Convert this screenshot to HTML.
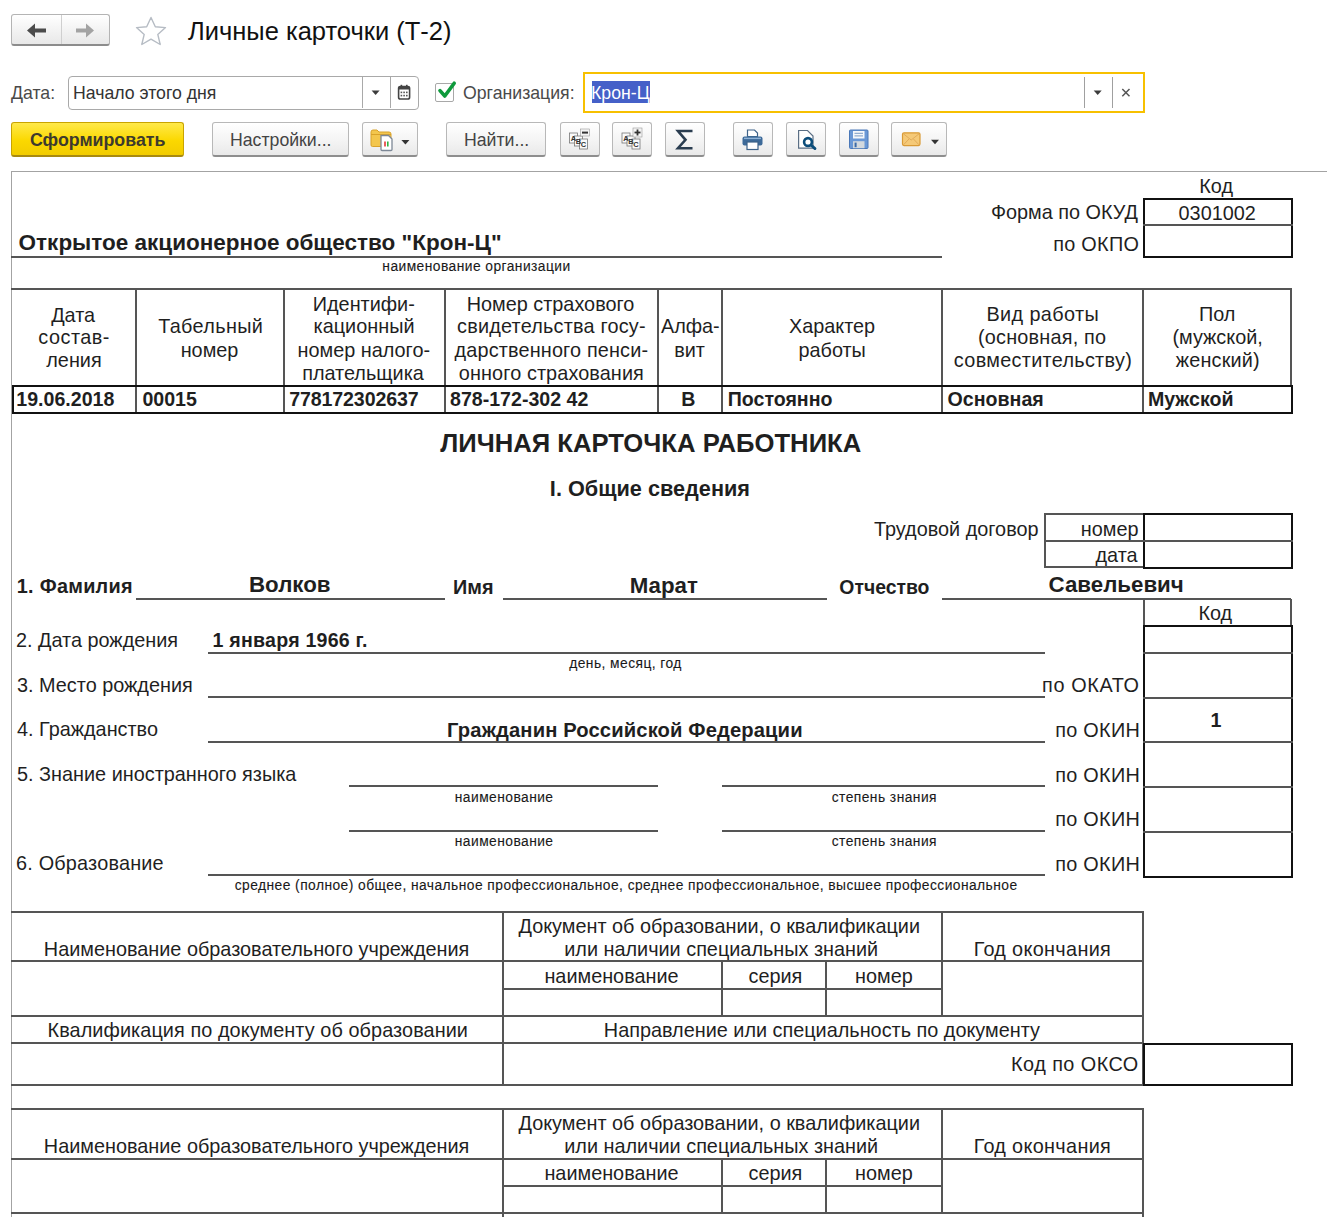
<!DOCTYPE html>
<html><head><meta charset="utf-8"><title>Личные карточки (Т-2)</title>
<style>
html,body{margin:0;padding:0;background:#fff;width:1327px;height:1217px;overflow:hidden;position:relative;font-family:"Liberation Sans", sans-serif;}
.t{position:absolute;white-space:nowrap;}
.l{position:absolute;}
</style></head><body>
<!-- nav buttons -->
<div style="position:absolute;left:11px;top:14px;width:97px;height:29px;border:1px solid #b4b4b4;border-bottom:2px solid #8c8c8c;border-radius:3px;background:linear-gradient(#ffffff,#f1f1f1 60%,#e8e8e8)"></div>
<div style="position:absolute;left:61px;top:15px;width:1px;height:29px;background:#cfcfcf"></div>
<svg style="position:absolute;left:0;top:0" width="200" height="60">
  <path d="M27 30.5 L35 23.5 L35 28.4 L46 28.4 L46 32.6 L35 32.6 L35 37.5 Z" fill="#4b4b4b"/>
  <path d="M94 30.5 L86 23.5 L86 28.4 L76 28.4 L76 32.6 L86 32.6 L86 37.5 Z" fill="#a3a3a3"/>
  <path d="M151 17.5 L155.3 26.7 L165.5 27.6 L157.8 34.4 L160.2 44.5 L151 39.2 L141.8 44.5 L144.2 34.4 L136.5 27.6 L146.7 26.7 Z" fill="none" stroke="#b6bcc4" stroke-width="1.4" stroke-linejoin="round"/>
</svg>
<div class="t" style="left:188px;top:18.7px;font-size:25.5px;line-height:25.5px;color:#111">Личные карточки (Т-2)</div>

<!-- filter row -->
<div class="t" style="left:11px;top:84.6px;font-size:17.7px;line-height:17.7px;color:#4a4a4a">Дата:</div>
<div style="position:absolute;left:68px;top:76px;width:349px;height:32px;border:1px solid #a9a9a9;border-radius:4px;background:#fff"></div>
<div style="position:absolute;left:362px;top:77px;width:1px;height:31px;background:#a9a9a9"></div>
<div style="position:absolute;left:390px;top:77px;width:1px;height:31px;background:#a9a9a9"></div>
<div class="t" style="left:73px;top:84.6px;font-size:17.7px;line-height:17.7px;color:#333">Начало этого дня</div>
<svg style="position:absolute;left:360px;top:75px" width="60" height="35">
  <path d="M11.6 15.5 L19.6 15.5 L15.6 20 Z" fill="#3c3c3c"/>
  <rect x="38.6" y="11.5" width="11" height="12.5" rx="1.8" fill="none" stroke="#444" stroke-width="1.6"/>
  <rect x="38.6" y="11.5" width="11" height="3" fill="#444"/>
  <rect x="40.6" y="9.8" width="1.6" height="3" fill="#444"/>
  <rect x="46" y="9.8" width="1.6" height="3" fill="#444"/>
  <g fill="#555"><rect x="40.6" y="16.6" width="1.6" height="1.6"/><rect x="43.3" y="16.6" width="1.6" height="1.6"/><rect x="46" y="16.6" width="1.6" height="1.6"/><rect x="40.6" y="19.8" width="1.6" height="1.6"/><rect x="43.3" y="19.8" width="1.6" height="1.6"/><rect x="46" y="19.8" width="1.6" height="1.6"/></g>
</svg>
<div style="position:absolute;left:435px;top:83px;width:17px;height:17px;border:1.5px solid #a8a8a8;border-radius:2px;background:#fff"></div>
<svg style="position:absolute;left:430px;top:75px" width="30" height="35">
  <path d="M10 15.6 L14.8 21 L24.2 8.2" fill="none" stroke="#0e9a3c" stroke-width="3.6" stroke-linecap="round" stroke-linejoin="round"/>
</svg>
<div class="t" style="left:463px;top:84.6px;font-size:17.7px;line-height:17.7px;color:#4a4a4a">Организация:</div>
<div style="position:absolute;left:583px;top:72px;width:558px;height:37px;border:2px solid #f7c000;background:#fff"></div>
<div style="position:absolute;left:592px;top:81px;width:58px;height:22px;background:#4560c8"></div>
<div class="t" style="left:591px;top:84.6px;font-size:17.7px;line-height:17.7px;color:#fff">Крон-Ц</div>
<div style="position:absolute;left:1084px;top:77px;width:1px;height:31px;background:#a0a0a0"></div>
<div style="position:absolute;left:1112px;top:77px;width:1px;height:31px;background:#a0a0a0"></div>
<svg style="position:absolute;left:1080px;top:75px" width="60" height="35">
  <path d="M13.7 15.5 L21.7 15.5 L17.7 20 Z" fill="#3c3c3c"/>
  <path d="M42.3 14 L49.5 21.2 M49.5 14 L42.3 21.2" stroke="#555" stroke-width="1.5"/>
</svg>

<!-- button row -->
<div style="position:absolute;left:11px;top:122px;width:171px;height:32px;border:1px solid #c9a400;border-bottom:2px solid #a88a10;border-radius:3px;background:linear-gradient(#ffe94a,#fbd800 55%,#f2cc00)"></div>
<div class="t" style="left:30px;top:132.2px;font-size:17.8px;line-height:17.8px;font-weight:bold;color:#3d3a2e">Сформировать</div>

<div style="position:absolute;left:212px;top:122px;width:135px;height:32px;border:1px solid #b8b8b8;border-bottom:2px solid #8e8e8e;border-radius:3px;background:linear-gradient(#ffffff,#f3f3f3 60%,#e9e9e9)"></div>
<div class="t" style="left:230px;top:132.2px;font-size:17.7px;line-height:17.7px;color:#444">Настройки...</div>

<div style="position:absolute;left:362px;top:122px;width:54px;height:32px;border:1px solid #b8b8b8;border-bottom:2px solid #8e8e8e;border-radius:3px;background:linear-gradient(#ffffff,#f3f3f3 60%,#e9e9e9)"></div>
<svg style="position:absolute;left:360px;top:120px" width="60" height="40">
  <path d="M11 12 Q11 10 13 10 L17 10 L19 12 L29 12 Q31 12 31 14 L31 25 Q31 26.5 29.5 26.5 L12.5 26.5 Q11 26.5 11 25 Z" fill="#f3c64d" stroke="#d9a22a" stroke-width="1"/>
  <path d="M11 14.5 L31 14.5" stroke="#d9a22a" stroke-width="1"/>
  <path d="M21 15.5 L28.5 15.5 L32 19 L32 29.5 Q32 30.5 31 30.5 L22 30.5 Q21 30.5 21 29.5 Z" fill="#fff" stroke="#7d8896" stroke-width="1.3"/>
  <rect x="24.2" y="21.5" width="1.6" height="5" fill="#e53935"/>
  <rect x="27" y="21.5" width="1.6" height="5" fill="#2fb344"/>
  <path d="M41.4 20 L49.4 20 L45.4 24.5 Z" fill="#333"/>
</svg>

<div style="position:absolute;left:446px;top:122px;width:98px;height:32px;border:1px solid #b8b8b8;border-bottom:2px solid #8e8e8e;border-radius:3px;background:linear-gradient(#ffffff,#f3f3f3 60%,#e9e9e9)"></div>
<div class="t" style="left:464px;top:132.2px;font-size:17.7px;line-height:17.7px;color:#444">Найти...</div>

<div style="position:absolute;left:560px;top:122px;width:38px;height:32px;border:1px solid #b8b8b8;border-bottom:2px solid #8e8e8e;border-radius:3px;background:linear-gradient(#ffffff,#f3f3f3 60%,#e9e9e9)"></div>
<div style="position:absolute;left:612px;top:122px;width:38px;height:32px;border:1px solid #b8b8b8;border-bottom:2px solid #8e8e8e;border-radius:3px;background:linear-gradient(#ffffff,#f3f3f3 60%,#e9e9e9)"></div>
<div style="position:absolute;left:665px;top:122px;width:38px;height:32px;border:1px solid #b8b8b8;border-bottom:2px solid #8e8e8e;border-radius:3px;background:linear-gradient(#ffffff,#f3f3f3 60%,#e9e9e9)"></div>
<svg style="position:absolute;left:555px;top:118px" width="160" height="42">
  <g font-family="Liberation Sans" font-size="7.5" font-weight="bold" fill="#333">
    <rect x="14.5" y="15" width="8" height="10" fill="#fafafa" stroke="#777" stroke-width="0.8"/>
    <rect x="19.5" y="18" width="8" height="10" fill="#fafafa" stroke="#777" stroke-width="0.8"/>
    <rect x="24.5" y="21" width="8" height="10" fill="#fafafa" stroke="#777" stroke-width="0.8"/>
    <text x="15.8" y="23">A</text><text x="20.8" y="26">B</text><text x="25.8" y="29">C</text>
    <rect x="25.5" y="11" width="9" height="7" fill="#f4f4f4" stroke="#999" stroke-width="0.6"/>
    <rect x="27" y="13.6" width="6" height="2" fill="#333"/>
  </g>
  <g font-family="Liberation Sans" font-size="7.5" font-weight="bold" fill="#333">
    <rect x="67" y="15" width="8" height="10" fill="#fafafa" stroke="#777" stroke-width="0.8"/>
    <rect x="72" y="18" width="8" height="10" fill="#fafafa" stroke="#777" stroke-width="0.8"/>
    <rect x="77" y="21" width="8" height="10" fill="#fafafa" stroke="#777" stroke-width="0.8"/>
    <text x="68.3" y="23">A</text><text x="73.3" y="26">B</text><text x="78.3" y="29">C</text>
    <rect x="78" y="10" width="9" height="9" fill="#f4f4f4" stroke="#999" stroke-width="0.6"/>
    <rect x="79.5" y="13.6" width="6" height="1.8" fill="#333"/><rect x="81.6" y="11.5" width="1.8" height="6" fill="#333"/>
  </g>
  <path d="M137.5 13 L123 13 L130.5 21.8 L123 30.2 L137.5 30.2" fill="none" stroke="#2a3d50" stroke-width="2.6" stroke-linejoin="miter"/>
</svg>

<div style="position:absolute;left:733px;top:122px;width:38px;height:32px;border:1px solid #b8b8b8;border-bottom:2px solid #8e8e8e;border-radius:3px;background:linear-gradient(#ffffff,#f3f3f3 60%,#e9e9e9)"></div>
<div style="position:absolute;left:786px;top:122px;width:38px;height:32px;border:1px solid #b8b8b8;border-bottom:2px solid #8e8e8e;border-radius:3px;background:linear-gradient(#ffffff,#f3f3f3 60%,#e9e9e9)"></div>
<div style="position:absolute;left:839px;top:122px;width:38px;height:32px;border:1px solid #b8b8b8;border-bottom:2px solid #8e8e8e;border-radius:3px;background:linear-gradient(#ffffff,#f3f3f3 60%,#e9e9e9)"></div>
<div style="position:absolute;left:891px;top:122px;width:54px;height:32px;border:1px solid #b8b8b8;border-bottom:2px solid #8e8e8e;border-radius:3px;background:linear-gradient(#ffffff,#f3f3f3 60%,#e9e9e9)"></div>
<svg style="position:absolute;left:728px;top:118px" width="230" height="42">
<g transform="translate(1.5,0.5)">
  <!-- printer -->
  <path d="M18 11.5 L25 11.5 L28 14.5 L28 18 L18 18 Z" fill="#fff" stroke="#3d6289" stroke-width="1.2"/>
  <rect x="13" y="18" width="20" height="9" rx="2" fill="#3d6a99"/>
  <rect x="14.5" y="19.2" width="17" height="1.4" fill="#8fb2d6"/>
  <rect x="17.5" y="23.5" width="11" height="7.5" fill="#fff" stroke="#3d6289" stroke-width="1.2"/>
  </g>
  <!-- preview -->
  <path d="M70.6 12.5 L79.5 12.5 L85 18 L85 30.2 L70.6 30.2 Z" fill="#fff" stroke="#5a6e84" stroke-width="1.2"/>
  <circle cx="80" cy="24" r="3.9" fill="#fff" stroke="#0c4d7a" stroke-width="2.6"/>
  <path d="M83 27 L87 30.6" stroke="#0c4d7a" stroke-width="2.8" stroke-linecap="round"/>
  <!-- floppy -->
  <rect x="121.5" y="12" width="18.5" height="18.5" rx="1" fill="#6a98d6" stroke="#4a78b8" stroke-width="1"/>
  <rect x="125" y="13" width="11.5" height="7.5" fill="#f4f7fb"/>
  <rect x="126.5" y="14.8" width="8.5" height="1" fill="#7a9bc4"/><rect x="126.5" y="17.4" width="8.5" height="1" fill="#7a9bc4"/>
  <rect x="125" y="23.2" width="11.5" height="7" fill="#d3d9de"/>
  <rect x="126.6" y="24.6" width="2" height="4.6" fill="#3a6aa8"/>
  <!-- envelope -->
  <rect x="174.5" y="14.8" width="17.5" height="12.8" rx="1.5" fill="#f5c977" stroke="#d99a35" stroke-width="1.2"/>
  <path d="M175.2 15.6 L183.2 22 L191.3 15.6 M175.5 26.8 L181 21 M191 26.8 L185.5 21" fill="none" stroke="#dea655" stroke-width="0.9"/>
  <path d="M203 21.8 L211 21.8 L207 26.3 Z" fill="#333"/>
</svg>

<div class="l" style="left:11px;top:171px;width:1316px;height:1px;background:#a3a3a3"></div>
<div class="l" style="left:11px;top:171px;width:1px;height:1046px;background:#a3a3a3"></div>
<div class="t" style="left:18.60px;top:232.00px;font-size:22.5px;line-height:22.5px;font-weight:bold;color:#1f1f1f;">Открытое акционерное общество "Крон-Ц"</div>
<div class="l" style="left:11px;top:256px;width:931px;height:2px;background:#555"></div>
<div class="t" style="left:382.32px;top:260.00px;font-size:13.8px;line-height:13.8px;font-weight:normal;color:#1a1a1a;letter-spacing:0.45px;-webkit-text-stroke:0.1px #111;">наименование организации</div>
<div class="t" style="left:1199.32px;top:177.00px;font-size:19.85px;line-height:19.85px;font-weight:normal;color:#1f1f1f;">Код</div>
<div class="t" style="left:990.92px;top:203.00px;font-size:19.85px;line-height:19.85px;font-weight:normal;color:#1f1f1f;">Форма по ОКУД</div>
<div class="t" style="left:1053.15px;top:235.00px;font-size:19.85px;line-height:19.85px;font-weight:normal;color:#1f1f1f;letter-spacing:0.3px;">по ОКПО</div>
<div class="l" style="left:1143px;top:198px;width:146px;height:56px;border:2px solid #111"></div>
<div class="l" style="left:1143px;top:224px;width:150px;height:2px;background:#555"></div>
<div class="t" style="left:1178.59px;top:204.00px;font-size:19.85px;line-height:19.85px;font-weight:normal;color:#1f1f1f;">0301002</div>
<div class="l" style="left:11px;top:288px;width:1281px;height:2px;background:#555"></div>
<div class="l" style="left:135px;top:289px;width:2px;height:123px;background:#555"></div>
<div class="l" style="left:283px;top:289px;width:2px;height:123px;background:#555"></div>
<div class="l" style="left:444px;top:289px;width:2px;height:123px;background:#555"></div>
<div class="l" style="left:657px;top:289px;width:2px;height:123px;background:#555"></div>
<div class="l" style="left:721px;top:289px;width:2px;height:123px;background:#555"></div>
<div class="l" style="left:941px;top:289px;width:2px;height:123px;background:#555"></div>
<div class="l" style="left:1142px;top:289px;width:2px;height:123px;background:#555"></div>
<div class="l" style="left:1290px;top:289px;width:2px;height:97px;background:#555"></div>
<div class="t" style="left:51.15px;top:306.00px;font-size:19.85px;line-height:19.85px;font-weight:normal;color:#1f1f1f;">Дата</div>
<div class="t" style="left:38.33px;top:328.00px;font-size:19.85px;line-height:19.85px;font-weight:normal;color:#1f1f1f;letter-spacing:0.5px;">состав-</div>
<div class="t" style="left:46.27px;top:351.00px;font-size:19.85px;line-height:19.85px;font-weight:normal;color:#1f1f1f;">ления</div>
<div class="t" style="left:158.14px;top:317.00px;font-size:19.85px;line-height:19.85px;font-weight:normal;color:#1f1f1f;letter-spacing:0.35px;">Табельный</div>
<div class="t" style="left:180.66px;top:341.00px;font-size:19.85px;line-height:19.85px;font-weight:normal;color:#1f1f1f;">номер</div>
<div class="t" style="left:312.79px;top:295.00px;font-size:19.85px;line-height:19.85px;font-weight:normal;color:#1f1f1f;">Идентифи-</div>
<div class="t" style="left:313.59px;top:317.00px;font-size:19.85px;line-height:19.85px;font-weight:normal;color:#1f1f1f;">кационный</div>
<div class="t" style="left:297.55px;top:341.00px;font-size:19.85px;line-height:19.85px;font-weight:normal;color:#1f1f1f;">номер налого-</div>
<div class="t" style="left:302.19px;top:364.00px;font-size:19.85px;line-height:19.85px;font-weight:normal;color:#1f1f1f;">плательщика</div>
<div class="t" style="left:466.72px;top:295.00px;font-size:19.85px;line-height:19.85px;font-weight:normal;color:#1f1f1f;">Номер страхового</div>
<div class="t" style="left:457.09px;top:317.00px;font-size:19.85px;line-height:19.85px;font-weight:normal;color:#1f1f1f;letter-spacing:0.2px;">свидетельства госу-</div>
<div class="t" style="left:454.62px;top:341.00px;font-size:19.85px;line-height:19.85px;font-weight:normal;color:#1f1f1f;letter-spacing:0.15px;">дарственного пенси-</div>
<div class="t" style="left:458.87px;top:364.00px;font-size:19.85px;line-height:19.85px;font-weight:normal;color:#1f1f1f;letter-spacing:0.1px;">онного страхования</div>
<div class="t" style="left:660.91px;top:317.00px;font-size:19.85px;line-height:19.85px;font-weight:normal;color:#1f1f1f;">Алфа-</div>
<div class="t" style="left:674.19px;top:341.00px;font-size:19.85px;line-height:19.85px;font-weight:normal;color:#1f1f1f;">вит</div>
<div class="t" style="left:788.92px;top:317.00px;font-size:19.85px;line-height:19.85px;font-weight:normal;color:#1f1f1f;">Характер</div>
<div class="t" style="left:798.44px;top:341.00px;font-size:19.85px;line-height:19.85px;font-weight:normal;color:#1f1f1f;">работы</div>
<div class="t" style="left:986.43px;top:305.00px;font-size:19.85px;line-height:19.85px;font-weight:normal;color:#1f1f1f;letter-spacing:0.4px;">Вид работы</div>
<div class="t" style="left:977.99px;top:328.00px;font-size:19.85px;line-height:19.85px;font-weight:normal;color:#1f1f1f;letter-spacing:0.2px;">(основная, по</div>
<div class="t" style="left:953.86px;top:351.00px;font-size:19.85px;line-height:19.85px;font-weight:normal;color:#1f1f1f;letter-spacing:0.3px;">совместительству)</div>
<div class="t" style="left:1198.97px;top:305.00px;font-size:19.85px;line-height:19.85px;font-weight:normal;color:#1f1f1f;">Пол</div>
<div class="t" style="left:1172.48px;top:328.00px;font-size:19.85px;line-height:19.85px;font-weight:normal;color:#1f1f1f;">(мужской,</div>
<div class="t" style="left:1175.85px;top:351.00px;font-size:19.85px;line-height:19.85px;font-weight:normal;color:#1f1f1f;letter-spacing:0.15px;">женский)</div>
<div class="l" style="left:12px;top:385px;width:1277px;height:25px;border:2px solid #111"></div>
<div class="t" style="left:16.30px;top:390.00px;font-size:19.6px;line-height:19.6px;font-weight:bold;color:#1f1f1f;">19.06.2018</div>
<div class="t" style="left:142.40px;top:390.00px;font-size:19.6px;line-height:19.6px;font-weight:bold;color:#1f1f1f;">00015</div>
<div class="t" style="left:289.20px;top:390.00px;font-size:19.6px;line-height:19.6px;font-weight:bold;color:#1f1f1f;letter-spacing:-0.12px;">778172302637</div>
<div class="t" style="left:450.00px;top:390.00px;font-size:19.6px;line-height:19.6px;font-weight:bold;color:#1f1f1f;">878-172-302 42</div>
<div class="t" style="left:727.70px;top:390.00px;font-size:19.6px;line-height:19.6px;font-weight:bold;color:#1f1f1f;">Постоянно</div>
<div class="t" style="left:947.60px;top:390.00px;font-size:19.6px;line-height:19.6px;font-weight:bold;color:#1f1f1f;">Основная</div>
<div class="t" style="left:1147.90px;top:390.00px;font-size:19.6px;line-height:19.6px;font-weight:bold;color:#1f1f1f;">Мужской</div>
<div class="t" style="left:681.20px;top:390.00px;font-size:19.6px;line-height:19.6px;font-weight:bold;color:#1f1f1f;">В</div>
<div class="t" style="left:440.27px;top:431.00px;font-size:25.66px;line-height:25.66px;font-weight:bold;color:#1f1f1f;">ЛИЧНАЯ КАРТОЧКА РАБОТНИКА</div>
<div class="t" style="left:549.86px;top:478.00px;font-size:21.7px;line-height:21.7px;font-weight:bold;color:#1f1f1f;">I. Общие сведения</div>
<div class="t" style="left:874.04px;top:520.00px;font-size:19.85px;line-height:19.85px;font-weight:normal;color:#1f1f1f;">Трудовой договор</div>
<div class="l" style="left:1044px;top:513px;width:101px;height:2px;background:#555"></div>
<div class="l" style="left:1044px;top:540px;width:101px;height:2px;background:#555"></div>
<div class="l" style="left:1044px;top:566px;width:101px;height:2px;background:#555"></div>
<div class="l" style="left:1044px;top:513px;width:2px;height:55px;background:#555"></div>
<div class="l" style="left:1143px;top:513px;width:146px;height:52px;border:2px solid #111"></div>
<div class="l" style="left:1143px;top:540px;width:150px;height:2px;background:#555"></div>
<div class="t" style="left:1080.83px;top:520.00px;font-size:19.85px;line-height:19.85px;font-weight:normal;color:#1f1f1f;">номер</div>
<div class="t" style="left:1095.46px;top:546.00px;font-size:19.85px;line-height:19.85px;font-weight:normal;color:#1f1f1f;">дата</div>
<div class="t" style="left:16.80px;top:577.00px;font-size:19.85px;line-height:19.85px;font-weight:bold;color:#1f1f1f;letter-spacing:0.27px;">1. Фамилия</div>
<div class="l" style="left:136px;top:598px;width:309px;height:2px;background:#555"></div>
<div class="t" style="left:248.99px;top:574.00px;font-size:22.3px;line-height:22.3px;font-weight:bold;color:#1f1f1f;">Волков</div>
<div class="t" style="left:453.00px;top:578.00px;font-size:19.85px;line-height:19.85px;font-weight:bold;color:#1f1f1f;">Имя</div>
<div class="l" style="left:503px;top:598px;width:324px;height:2px;background:#555"></div>
<div class="t" style="left:629.67px;top:575.00px;font-size:22.3px;line-height:22.3px;font-weight:bold;color:#1f1f1f;">Марат</div>
<div class="t" style="left:839.30px;top:578.00px;font-size:19.4px;line-height:19.4px;font-weight:bold;color:#1f1f1f;">Отчество</div>
<div class="l" style="left:942px;top:598px;width:349px;height:2px;background:#555"></div>
<div class="t" style="left:1048.56px;top:574.00px;font-size:22.3px;line-height:22.3px;font-weight:bold;color:#1f1f1f;">Савельевич</div>
<div class="l" style="left:1143px;top:599px;width:2px;height:28px;background:#555"></div>
<div class="l" style="left:1290px;top:599px;width:2px;height:28px;background:#555"></div>
<div class="t" style="left:1198.42px;top:604.00px;font-size:19.85px;line-height:19.85px;font-weight:normal;color:#1f1f1f;">Код</div>
<div class="l" style="left:1143px;top:625px;width:146px;height:249px;border:2px solid #111"></div>
<div class="l" style="left:1143px;top:652px;width:150px;height:2px;background:#555"></div>
<div class="l" style="left:1143px;top:697px;width:150px;height:2px;background:#555"></div>
<div class="l" style="left:1143px;top:741px;width:150px;height:2px;background:#555"></div>
<div class="l" style="left:1143px;top:786px;width:150px;height:2px;background:#555"></div>
<div class="l" style="left:1143px;top:831px;width:150px;height:2px;background:#555"></div>
<div class="t" style="left:1210.40px;top:711.00px;font-size:19.6px;line-height:19.6px;font-weight:bold;color:#1f1f1f;">1</div>
<div class="t" style="left:16.00px;top:631.00px;font-size:19.85px;line-height:19.85px;font-weight:normal;color:#1f1f1f;">2. Дата рождения</div>
<div class="t" style="left:212.60px;top:631.00px;font-size:19.6px;line-height:19.6px;font-weight:bold;color:#1f1f1f;letter-spacing:0.22px;">1 января 1966 г.</div>
<div class="l" style="left:208px;top:652px;width:837px;height:2px;background:#555"></div>
<div class="t" style="left:569.23px;top:657.00px;font-size:13.8px;line-height:13.8px;font-weight:normal;color:#1a1a1a;letter-spacing:0.45px;-webkit-text-stroke:0.1px #111;">день, месяц, год</div>
<div class="t" style="left:17.00px;top:676.00px;font-size:19.85px;line-height:19.85px;font-weight:normal;color:#1f1f1f;">3. Место рождения</div>
<div class="l" style="left:208px;top:696px;width:837px;height:2px;background:#555"></div>
<div class="t" style="left:1042.10px;top:676.00px;font-size:19.85px;line-height:19.85px;font-weight:normal;color:#1f1f1f;letter-spacing:0.6px;">по ОКАТО</div>
<div class="t" style="left:17.00px;top:720.00px;font-size:19.85px;line-height:19.85px;font-weight:normal;color:#1f1f1f;">4. Гражданство</div>
<div class="l" style="left:208px;top:741px;width:837px;height:2px;background:#555"></div>
<div class="t" style="left:447.07px;top:720.00px;font-size:20.2px;line-height:20.2px;font-weight:bold;color:#1f1f1f;letter-spacing:0.12px;">Гражданин Российской Федерации</div>
<div class="t" style="left:1055.15px;top:721.00px;font-size:19.85px;line-height:19.85px;font-weight:normal;color:#1f1f1f;letter-spacing:0.3px;">по ОКИН</div>
<div class="t" style="left:17.00px;top:765.00px;font-size:19.85px;line-height:19.85px;font-weight:normal;color:#1f1f1f;">5. Знание иностранного языка</div>
<div class="l" style="left:349px;top:785px;width:309px;height:2px;background:#555"></div>
<div class="l" style="left:722px;top:785px;width:323px;height:2px;background:#555"></div>
<div class="t" style="left:454.81px;top:791.00px;font-size:13.8px;line-height:13.8px;font-weight:normal;color:#1a1a1a;letter-spacing:0.45px;-webkit-text-stroke:0.1px #111;">наименование</div>
<div class="t" style="left:831.74px;top:791.00px;font-size:13.8px;line-height:13.8px;font-weight:normal;color:#1a1a1a;letter-spacing:0.45px;-webkit-text-stroke:0.1px #111;">степень знания</div>
<div class="t" style="left:1055.15px;top:766.00px;font-size:19.85px;line-height:19.85px;font-weight:normal;color:#1f1f1f;letter-spacing:0.3px;">по ОКИН</div>
<div class="l" style="left:349px;top:830px;width:309px;height:2px;background:#555"></div>
<div class="l" style="left:722px;top:830px;width:323px;height:2px;background:#555"></div>
<div class="t" style="left:454.81px;top:835.00px;font-size:13.8px;line-height:13.8px;font-weight:normal;color:#1a1a1a;letter-spacing:0.45px;-webkit-text-stroke:0.1px #111;">наименование</div>
<div class="t" style="left:831.74px;top:835.00px;font-size:13.8px;line-height:13.8px;font-weight:normal;color:#1a1a1a;letter-spacing:0.45px;-webkit-text-stroke:0.1px #111;">степень знания</div>
<div class="t" style="left:1055.15px;top:810.00px;font-size:19.85px;line-height:19.85px;font-weight:normal;color:#1f1f1f;letter-spacing:0.3px;">по ОКИН</div>
<div class="t" style="left:16.00px;top:854.00px;font-size:19.85px;line-height:19.85px;font-weight:normal;color:#1f1f1f;letter-spacing:0.2px;">6. Образование</div>
<div class="l" style="left:208px;top:874px;width:837px;height:2px;background:#555"></div>
<div class="t" style="left:234.73px;top:879.00px;font-size:13.8px;line-height:13.8px;font-weight:normal;color:#1a1a1a;letter-spacing:0.45px;-webkit-text-stroke:0.1px #111;">среднее (полное) общее, начальное профессиональное, среднее профессиональное, высшее профессиональное</div>
<div class="t" style="left:1055.15px;top:855.00px;font-size:19.85px;line-height:19.85px;font-weight:normal;color:#1f1f1f;letter-spacing:0.3px;">по ОКИН</div>
<div class="l" style="left:11px;top:911px;width:1133px;height:2px;background:#555"></div>
<div class="l" style="left:11px;top:960px;width:1133px;height:2px;background:#555"></div>
<div class="l" style="left:503px;top:988px;width:439px;height:2px;background:#555"></div>
<div class="l" style="left:11px;top:1015px;width:1133px;height:2px;background:#555"></div>
<div class="l" style="left:502px;top:912px;width:2px;height:173px;background:#555"></div>
<div class="l" style="left:721px;top:962px;width:2px;height:54px;background:#555"></div>
<div class="l" style="left:825px;top:962px;width:2px;height:54px;background:#555"></div>
<div class="l" style="left:941px;top:912px;width:2px;height:104px;background:#555"></div>
<div class="l" style="left:1142px;top:912px;width:2px;height:173px;background:#555"></div>
<div class="t" style="left:43.85px;top:940.00px;font-size:19.85px;line-height:19.85px;font-weight:normal;color:#1f1f1f;">Наименование образовательного учреждения</div>
<div class="t" style="left:518.50px;top:917.00px;font-size:19.85px;line-height:19.85px;font-weight:normal;color:#1f1f1f;">Документ об образовании, о квалификации</div>
<div class="t" style="left:564.28px;top:940.00px;font-size:19.85px;line-height:19.85px;font-weight:normal;color:#1f1f1f;">или наличии специальных знаний</div>
<div class="t" style="left:973.69px;top:940.00px;font-size:19.85px;line-height:19.85px;font-weight:normal;color:#1f1f1f;letter-spacing:0.33px;">Год окончания</div>
<div class="t" style="left:544.42px;top:967.00px;font-size:19.85px;line-height:19.85px;font-weight:normal;color:#1f1f1f;">наименование</div>
<div class="t" style="left:748.46px;top:967.00px;font-size:19.85px;line-height:19.85px;font-weight:normal;color:#1f1f1f;">серия</div>
<div class="t" style="left:855.06px;top:967.00px;font-size:19.85px;line-height:19.85px;font-weight:normal;color:#1f1f1f;">номер</div>
<div class="l" style="left:11px;top:1042px;width:1133px;height:2px;background:#555"></div>
<div class="l" style="left:11px;top:1084px;width:1133px;height:2px;background:#555"></div>
<div class="t" style="left:47.53px;top:1021.00px;font-size:19.85px;line-height:19.85px;font-weight:normal;color:#1f1f1f;letter-spacing:0.08px;">Квалификация по документу об образовании</div>
<div class="t" style="left:603.82px;top:1021.00px;font-size:19.85px;line-height:19.85px;font-weight:normal;color:#1f1f1f;">Направление или специальность по документу</div>
<div class="t" style="left:1011.09px;top:1055.00px;font-size:19.85px;line-height:19.85px;font-weight:normal;color:#1f1f1f;letter-spacing:0.45px;">Код по ОКСО</div>
<div class="l" style="left:1143px;top:1043px;width:146px;height:39px;border:2px solid #111"></div>
<div class="l" style="left:11px;top:1108px;width:1133px;height:2px;background:#555"></div>
<div class="l" style="left:11px;top:1158px;width:1133px;height:2px;background:#555"></div>
<div class="l" style="left:503px;top:1185px;width:439px;height:2px;background:#555"></div>
<div class="l" style="left:11px;top:1212px;width:1133px;height:2px;background:#555"></div>
<div class="l" style="left:502px;top:1109px;width:2px;height:108px;background:#555"></div>
<div class="l" style="left:721px;top:1158px;width:2px;height:55px;background:#555"></div>
<div class="l" style="left:825px;top:1158px;width:2px;height:55px;background:#555"></div>
<div class="l" style="left:941px;top:1109px;width:2px;height:104px;background:#555"></div>
<div class="l" style="left:1142px;top:1109px;width:2px;height:108px;background:#555"></div>
<div class="t" style="left:43.85px;top:1137.00px;font-size:19.85px;line-height:19.85px;font-weight:normal;color:#1f1f1f;">Наименование образовательного учреждения</div>
<div class="t" style="left:518.50px;top:1114.00px;font-size:19.85px;line-height:19.85px;font-weight:normal;color:#1f1f1f;">Документ об образовании, о квалификации</div>
<div class="t" style="left:564.28px;top:1137.00px;font-size:19.85px;line-height:19.85px;font-weight:normal;color:#1f1f1f;">или наличии специальных знаний</div>
<div class="t" style="left:973.69px;top:1137.00px;font-size:19.85px;line-height:19.85px;font-weight:normal;color:#1f1f1f;letter-spacing:0.33px;">Год окончания</div>
<div class="t" style="left:544.42px;top:1164.00px;font-size:19.85px;line-height:19.85px;font-weight:normal;color:#1f1f1f;">наименование</div>
<div class="t" style="left:748.46px;top:1164.00px;font-size:19.85px;line-height:19.85px;font-weight:normal;color:#1f1f1f;">серия</div>
<div class="t" style="left:855.06px;top:1164.00px;font-size:19.85px;line-height:19.85px;font-weight:normal;color:#1f1f1f;">номер</div>
</body></html>
